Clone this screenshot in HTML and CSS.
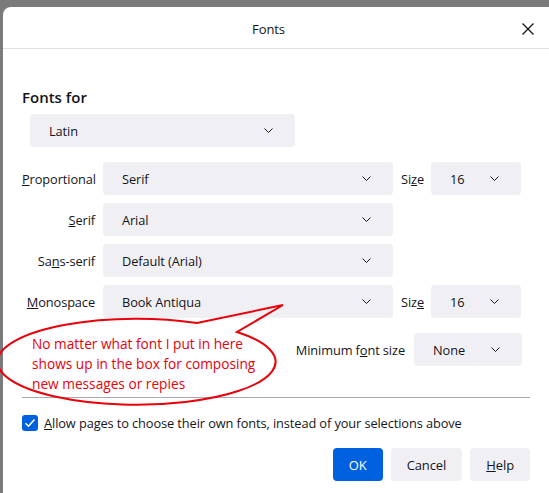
FILE: index.html
```html
<!DOCTYPE html>
<html lang="en">
<head>
  <meta charset="UTF-8" />
  <meta name="viewport" content="width=device-width, initial-scale=1.0" />
  <title>Fonts</title>
  <link rel="stylesheet" href="styles.css">
</head>
<body>
  <div class="dialog">
    <div class="dialog-header">
      <span></span>
      <div class="dialog-title">Fonts</div>
      <button class="close-btn" aria-label="Close">
        <svg width="12" height="12" viewBox="0 0 12 12"><path d="M0.5 0.5 L11.5 11.5 M11.5 0.5 L0.5 11.5" stroke="#15141a" stroke-width="1.3" fill="none"/></svg>
      </button>
    </div>

    <div class="dialog-body">
      <h2 class="section-title">Fonts for</h2>
      <div class="select select-lang">
        <span>Latin</span>
        <svg class="chevron" width="9" height="5" viewBox="0 0 9 5"><path d="M0.5 0.5 L4.5 4.5 L8.5 0.5" stroke="#15141a" fill="none"/></svg>
      </div>

      <div class="font-grid">
        <label class="row-label"><u>P</u>roportional</label>
        <div class="select">
          <span>Serif</span>
          <svg class="chevron" width="9" height="5" viewBox="0 0 9 5"><path d="M0.5 0.5 L4.5 4.5 L8.5 0.5" stroke="#15141a" fill="none"/></svg>
        </div>
        <label class="size-label">Si<u>z</u>e</label>
        <div class="select">
          <span>16</span>
          <svg class="chevron" width="9" height="5" viewBox="0 0 9 5"><path d="M0.5 0.5 L4.5 4.5 L8.5 0.5" stroke="#15141a" fill="none"/></svg>
        </div>

        <label class="row-label"><u>S</u>erif</label>
        <div class="select">
          <span>Arial</span>
          <svg class="chevron" width="9" height="5" viewBox="0 0 9 5"><path d="M0.5 0.5 L4.5 4.5 L8.5 0.5" stroke="#15141a" fill="none"/></svg>
        </div>
        <span></span><span></span>

        <label class="row-label">Sa<u>n</u>s-serif</label>
        <div class="select">
          <span>Default (Arial)</span>
          <svg class="chevron" width="9" height="5" viewBox="0 0 9 5"><path d="M0.5 0.5 L4.5 4.5 L8.5 0.5" stroke="#15141a" fill="none"/></svg>
        </div>
        <span></span><span></span>

        <label class="row-label"><u>M</u>onospace</label>
        <div class="select">
          <span>Book Antiqua</span>
          <svg class="chevron" width="9" height="5" viewBox="0 0 9 5"><path d="M0.5 0.5 L4.5 4.5 L8.5 0.5" stroke="#15141a" fill="none"/></svg>
        </div>
        <label class="size-label">Siz<u>e</u></label>
        <div class="select">
          <span>16</span>
          <svg class="chevron" width="9" height="5" viewBox="0 0 9 5"><path d="M0.5 0.5 L4.5 4.5 L8.5 0.5" stroke="#15141a" fill="none"/></svg>
        </div>
      </div>

      <div class="min-row">
        <label>Minimum f<u>o</u>nt size</label>
        <div class="select select-min">
          <span>None</span>
          <svg class="chevron" width="9" height="5" viewBox="0 0 9 5"><path d="M0.5 0.5 L4.5 4.5 L8.5 0.5" stroke="#15141a" fill="none"/></svg>
        </div>
      </div>

      <hr class="divider">

      <div class="check-row">
        <span class="checkbox">
          <svg width="16" height="16" viewBox="0 0 16 16"><path d="M3.5 8.2 L6.5 11.2 L12.5 4.5" stroke="#fff" stroke-width="1.6" fill="none"/></svg>
        </span>
        <label><u>A</u>llow pages to choose their own fonts, instead of your selections above</label>
      </div>

      <div class="button-row">
        <button class="btn btn-primary">OK</button>
        <button class="btn">Cancel</button>
        <button class="btn"><u>H</u>elp</button>
      </div>
    </div>
  </div>

  <!-- annotation callout drawn over the dialog -->
  <svg class="callout" width="549" height="493" viewBox="0 0 549 493">
    <path d="M237 332 A139 43 0 1 1 197 323 L283 305 Z" stroke="#e8000b" stroke-width="2" fill="none" stroke-linejoin="miter"/>
  </svg>
  <div class="callout-text">No matter what font I put in here<br>shows up in the box for composing<br>new messages or repies</div>
</body>
</html>
```

FILE: styles.css
```css
* {
  box-sizing: border-box;
}
body {
  margin: 0;
  font-family: 'Open Sans', 'Noto Sans', sans-serif;
  font-size: 12.8px;
  letter-spacing: -0.1px;
  color: #15141a;
  background: #7b7b7b;
  overflow: hidden;
}
.dialog {
  margin: 7px 0 0 3px;
  height: calc(100vh - 7px);
  background: #fff;
  border-top-left-radius: 8px;
}
.dialog-header {
  display: grid;
  grid-template-columns: 1fr auto 1fr;
  align-items: center;
  height: 42px;
  border-bottom: 1px solid #e0e0e6;
  padding: 2px 15px 0 0;
}
.dialog-title {
  font-size: 13px;
}
.close-btn {
  justify-self: end;
  border: none;
  background: none;
  padding: 0;
  width: 12px;
  height: 12px;
  display: flex;
}
.dialog-body {
  padding: 37px 19px 0 19px;
}
.section-title {
  margin: 0;
  font-size: 15px;
  font-weight: 600;
  line-height: 22px;
  letter-spacing: 0;
}
.select {
  display: flex;
  align-items: center;
  justify-content: space-between;
  height: 33px;
  padding: 0 22px 0 19px;
  background: #f0f0f4;
  border-radius: 4px;
}
.chevron {
  flex: none;
}
.select-lang {
  width: 265px;
  margin: 6px 0 0 8px;
}
.font-grid {
  display: grid;
  grid-template-columns: 73px 290px 22px 90px;
  grid-auto-rows: 33px;
  column-gap: 8px;
  row-gap: 8px;
  align-items: center;
  margin-top: 15px;
}
.row-label {
  text-align: right;
  white-space: nowrap;
}
.size-label {
  white-space: nowrap;
}
.min-row {
  display: flex;
  justify-content: flex-end;
  align-items: center;
  gap: 9px;
  margin: 15px 8px 0 0;
}
.select-min {
  width: 108px;
}
.divider {
  border: none;
  border-top: 1px solid #a9a9b0;
  margin: 31px 0 0 0;
}
.check-row {
  display: flex;
  align-items: center;
  gap: 6px;
  margin-top: 16px;
}
.checkbox {
  width: 16px;
  height: 16px;
  border-radius: 3px;
  background: #0061e0;
  display: flex;
}
.button-row {
  display: flex;
  justify-content: flex-end;
  gap: 8px;
  margin-top: 16px;
}
.btn {
  height: 33px;
  padding: 0 16px;
  border: none;
  border-radius: 4px;
  background: #f0f0f4;
  color: #15141a;
  font-family: inherit;
  font-size: 13px;
  letter-spacing: -0.1px;
}
.btn-primary {
  background: #0061e0;
  color: #fff;
}
.callout {
  position: absolute;
  top: 0;
  left: 0;
  pointer-events: none;
}
.callout-text {
  position: absolute;
  top: 334px;
  left: 32px;
  color: #e8000b;
  font-size: 13.7px;
  letter-spacing: 0;
  line-height: 20px;
}
```
